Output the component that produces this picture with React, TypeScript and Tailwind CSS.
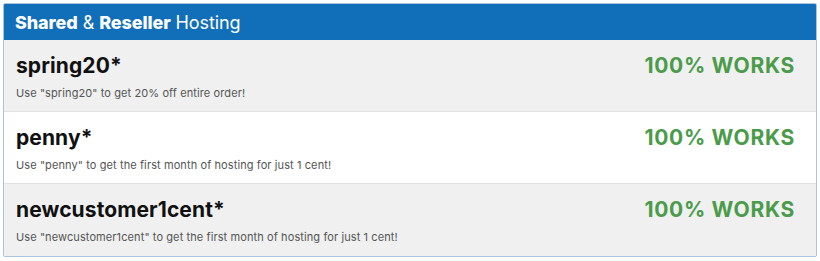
import React from "react";

const rows = [
  { code: "spring20*", desc: 'Use "spring20" to get 20% off entire order!', bg: "bg-[#f0f0f0]" },
  { code: "penny*", desc: 'Use "penny" to get the first month of hosting for just 1 cent!', bg: "bg-white" },
  { code: "newcustomer1cent*", desc: 'Use "newcustomer1cent" to get the first month of hosting for just 1 cent!', bg: "bg-[#f0f0f0]" },
];

export default function App() {
  return (
    <div className="w-[820px] h-[261px] bg-white p-[3px]" style={{ fontFamily: "Inter, 'Noto Sans', sans-serif" }}>
      <div className="border border-[#a8c4e0] rounded-[2px] overflow-hidden w-[814px]">
        <div className="bg-[#106fb8] h-[36px] flex items-center pl-[11px] pt-[1px] text-white text-[18px] tracking-[-0.1px]">
          <span className="font-extrabold">Shared</span>
          <span className="mx-[5px]">&amp;</span>
          <span className="font-extrabold">Reseller</span>
          <span className="ml-[5px]">Hosting</span>
        </div>
        {rows.map((r, i) => (
          <div
            key={i}
            className={`${r.bg} flex justify-between pl-[12px] pr-[21px] ${i < 2 ? "border-b border-[#e2e2e2] h-[72px]" : "h-[72px]"}`}
          >
            <div className="flex flex-col pt-[14px]">
              <div className="text-[21px] font-bold text-[#111] leading-[24px] tracking-[0.1px]">{r.code}</div>
              <div className="text-[11px] text-[#555] mt-[8px] leading-[14px] tracking-[0.1px]">{r.desc}</div>
            </div>
            <div className="pt-[14px] text-[21px] font-bold text-[#4a9b4a] leading-[24px] tracking-[0.7px]">100% WORKS</div>
          </div>
        ))}
      </div>
    </div>
  );
}
